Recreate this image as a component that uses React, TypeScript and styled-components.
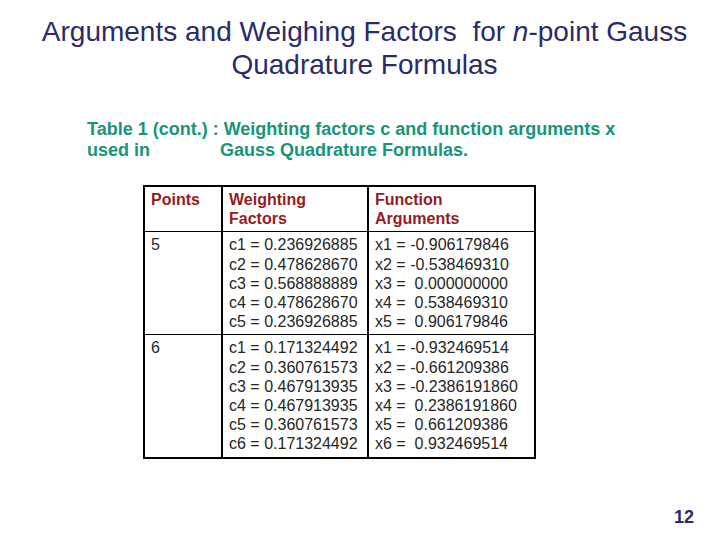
import React from "react";
import styled, { createGlobalStyle } from "styled-components";

const GlobalStyle = createGlobalStyle`
  html, body {
    margin: 0;
    padding: 0;
    background: #ffffff;
  }
`;

const Slide = styled.div`
  width: 720px;
  height: 540px;
  box-sizing: border-box;
  display: flex;
  flex-direction: column;
  align-items: flex-start;
  font-family: "Liberation Sans", Arial, sans-serif;
  background: #ffffff;
  padding-top: 15px;
`;

const Title = styled.h1`
  margin: 0;
  align-self: stretch;
  text-align: center;
  font-size: 28px;
  line-height: 33px;
  font-weight: normal;
  color: #2b2b6b;
  padding-left: 9px;

  em {
    font-style: italic;
  }
`;

const Caption = styled.p`
  margin: 38px 0 0 87px;
  font-size: 18px;
  line-height: 21px;
  font-weight: bold;
  color: #17957a;
`;

const Gap = styled.span`
  display: inline-block;
  width: 70px;
`;

const Table = styled.table`
  margin: 24px 0 0 143px;
  border-collapse: collapse;
  border: 2px solid #000;
  font-size: 16px;
  line-height: 19.2px;
  color: #222;
`;

const Cell = styled.td<{ $w: number; $head?: boolean }>`
  width: ${({ $w }) => $w}px;
  box-sizing: border-box;
  border: 1px solid #000;
  border-left-width: 2px;
  border-right-width: 2px;
  padding: 3px 6px 3px 6px;
  vertical-align: top;
  text-align: left;
  font-weight: ${({ $head }) => ($head ? "bold" : "normal")};
  color: ${({ $head }) => ($head ? "#971b1e" : "#262626")};
  white-space: pre;
`;

const Footer = styled.div`
  margin-top: auto;
  align-self: stretch;
  display: flex;
  justify-content: flex-end;
  padding: 0 26px 12px 0;
  font-size: 18px;
  font-weight: bold;
  color: #2b2b6b;
`;

const widths = [78, 146, 167];

const rows = [
  {
    points: "5",
    c: ["0.236926885", "0.478628670", "0.568888889", "0.478628670", "0.236926885"],
    x: ["-0.906179846", "-0.538469310", " 0.000000000", " 0.538469310", " 0.906179846"],
  },
  {
    points: "6",
    c: ["0.171324492", "0.360761573", "0.467913935", "0.467913935", "0.360761573", "0.171324492"],
    x: ["-0.932469514", "-0.661209386", "-0.2386191860", " 0.2386191860", " 0.661209386", " 0.932469514"],
  },
];

export default function App() {
  return (
    <>
      <GlobalStyle />
      <Slide>
        <Title>
          Arguments and Weighing Factors&nbsp; for <em>n</em>-point Gauss
          <br />
          Quadrature Formulas
        </Title>
        <Caption>
          Table 1 (cont.) : Weighting factors c and function arguments x
          <br />
          used in<Gap />Gauss Quadrature Formulas.
        </Caption>
        <Table>
          <tbody>
            <tr>
              <Cell $w={widths[0]} $head>Points</Cell>
              <Cell $w={widths[1]} $head>{"Weighting\nFactors"}</Cell>
              <Cell $w={widths[2]} $head>{"Function\nArguments"}</Cell>
            </tr>
            {rows.map((r) => (
              <tr key={r.points}>
                <Cell $w={widths[0]}>{r.points}</Cell>
                <Cell $w={widths[1]}>
                  {r.c.map((v, i) => `c${i + 1} = ${v}`).join("\n")}
                </Cell>
                <Cell $w={widths[2]}>
                  {r.x.map((v, i) => `x${i + 1} = ${v}`).join("\n")}
                </Cell>
              </tr>
            ))}
          </tbody>
        </Table>
        <Footer>12</Footer>
      </Slide>
    </>
  );
}
